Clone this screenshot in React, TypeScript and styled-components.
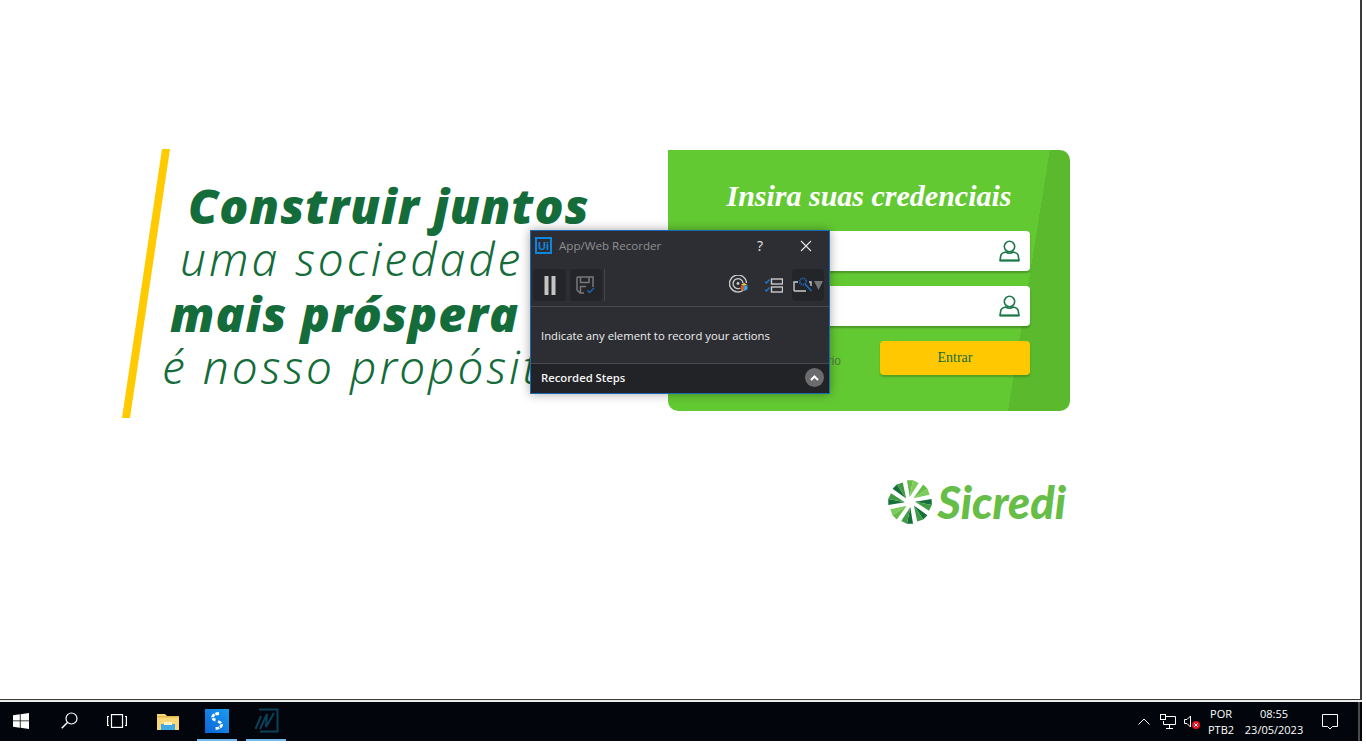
import styled, { createGlobalStyle } from "styled-components";

const Global = createGlobalStyle`
  html, body { margin: 0; padding: 0; background: #ffffff; }
  body { font-family: "Open Sans", sans-serif; overflow: hidden; }
  * { box-sizing: border-box; }
`;

const Screen = styled.div`
  position: relative;
  width: 1362px;
  height: 741px;
  display: flex;
  flex-direction: column;
`;

const Page = styled.main`
  height: 700px;
  display: flex;
  padding: 149px 0 0 122px;
  background: #fff;
  border-right: 2px solid #3a3a3a;
  border-bottom: 1px solid #3a3a3a;
`;

const Slogan = styled.section`
  width: 546px;
  display: flex;
  align-items: flex-start;
`;

const Slash = styled.svg`
  flex: none;
  margin-right: -48px;
`;

const SloganText = styled.div`
  padding-top: 28px;
  white-space: nowrap;
  color: #146c3a;
`;

const Line = styled.div<{ $indent: number; $strong?: boolean }>`
  height: 54px;
  line-height: ${(p) => (p.$strong ? 58 : 54)}px;
  margin-left: ${(p) => p.$indent}px;
  font-family: ${(p) => (p.$strong ? '"Open Sans"' : '"Noto Sans"')}, sans-serif;
  font-style: italic;
  font-weight: ${(p) => (p.$strong ? 800 : 350)};
  font-size: ${(p) => (p.$strong ? 48 : 46)}px;
  letter-spacing: ${(p) => (p.$strong ? 1 : 3)}px;
`;

const RightCol = styled.section`
  width: 402px;
  padding-top: 1px;
`;

const Card = styled.form`
  height: 261px;
  padding: 30px 40px 0;
  border-radius: 0 10px 10px 10px;
  background: linear-gradient(99.1deg, #63c932 377px, #5ab92d 377px);
`;

const CardTitle = styled.h2`
  margin: 0 0 19px;
  text-align: center;
  color: #fff;
  font: italic bold 30px/32px "Liberation Serif", serif;
`;

const Field = styled.div`
  height: 40px;
  margin-bottom: 15px;
  padding-right: 10px;
  display: flex;
  align-items: center;
  justify-content: flex-end;
  background: #fff;
  border-radius: 4px;
  box-shadow: 0 2px 2px rgba(0, 0, 0, 0.25);
`;

const Actions = styled.div`
  display: flex;
  align-items: center;
  justify-content: space-between;
`;

const Forgot = styled.a`
  width: 133px;
  text-align: right;
  white-space: nowrap;
  padding-top: 5px;
  color: #4e7f40;
  font: 12px "Liberation Sans", sans-serif;
`;

const SubmitButton = styled.div`
  width: 150px;
  height: 34px;
  display: flex;
  align-items: center;
  justify-content: center;
  background: #ffc800;
  border-radius: 4px;
  color: #146c3a;
  box-shadow: 0 2px 2px rgba(0, 0, 0, 0.2);
  font: 14px "Liberation Serif", serif;
`;

const Brand = styled.div`
  margin-top: 68px;
  padding-right: 4px;
  display: flex;
  justify-content: flex-end;
  align-items: center;
  gap: 5px;
`;

const BrandName = styled.span`
  color: #66bd47;
  font: italic 900 45px/46px "Lato", sans-serif;
`;

/* floating recorder window */
const Recorder = styled.aside`
  position: absolute;
  left: 530px;
  top: 230px;
  width: 300px;
  height: 164px;
  display: flex;
  flex-direction: column;
  background: #2d2e33;
  border: 1px solid #1d68b4;
  box-shadow: 0 0 10px rgba(0, 0, 0, 0.35);
  font-family: "Open Sans", sans-serif;
`;

const RecHeader = styled.header`
  height: 31px;
  display: flex;
  align-items: center;
  padding: 0 0 2px 4px;
`;

const UiLogo = styled.span`
  width: 17px;
  height: 17px;
  display: flex;
  align-items: center;
  justify-content: center;
  border: 2px solid #0e86e0;
  color: #0e86e0;
  font: bold 11px "Liberation Sans", sans-serif;
`;

const RecTitle = styled.span`
  margin-left: 7px;
  width: 193px;
  color: #8d8e92;
  font-size: 11.6px;
`;

const HeaderGlyph = styled.span<{ $gap?: number }>`
  width: 16px;
  margin-left: ${(p) => p.$gap ?? 0}px;
  display: flex;
  justify-content: center;
  color: #e8e8e8;
  font-size: 14px;
`;

const RecToolbar = styled.div`
  height: 45px;
  padding: 7px 5px 3px 2px;
  display: flex;
  align-items: flex-start;
  border-bottom: 1px solid #4a4b50;
`;

const ToolButton = styled.div<{ $width?: number; $plain?: boolean; $gap?: number }>`
  width: ${(p) => p.$width ?? 33}px;
  height: 32px;
  margin-left: ${(p) => p.$gap ?? 0}px;
  display: flex;
  align-items: center;
  justify-content: center;
  border-radius: 4px;
  background: ${(p) => (p.$plain ? "transparent" : "#242529")};
`;

const ToolSep = styled.div`
  width: 1px;
  height: 32px;
  margin: 0 auto 0 2px;
  background: #46474b;
`;

const RecMessage = styled.div`
  flex: 1;
  padding: 0 10px;
  display: flex;
  align-items: center;
  color: #eeeef0;
  font-size: 11.3px;
`;

const RecFooter = styled.footer`
  height: 30px;
  padding: 0 5px 2px 10px;
  display: flex;
  align-items: center;
  justify-content: space-between;
  background: #222326;
  border-top: 1px solid #4a4b50;
  color: #f4f4f4;
  font-size: 11.3px;
  font-weight: 600;
`;

const RoundButton = styled.div`
  width: 19px;
  height: 19px;
  border-radius: 50%;
  display: flex;
  align-items: center;
  justify-content: center;
  background: #6c6c6e;
`;

/* windows taskbar */
const Taskbar = styled.footer`
  height: 41px;
  display: flex;
  align-items: stretch;
  border-top: 2px solid #ececec;
  background: #02060c;
`;

const TaskSlot = styled.div<{ $width: number; $active?: boolean }>`
  width: ${(p) => p.$width}px;
  display: flex;
  align-items: center;
  justify-content: center;
  border-bottom: 2px solid ${(p) => (p.$active ? "#76b9ed" : "transparent")};
`;

const PinnedApps = styled.div`
  margin-left: 10px;
  display: flex;
  gap: 9px;
`;

const Tray = styled.div`
  margin-left: auto;
  display: flex;
  color: #fff;
  font-size: 11px;
`;

const TrayIcon = styled.div<{ $width: number }>`
  width: ${(p) => p.$width}px;
  display: flex;
  align-items: center;
  justify-content: center;
`;

const TrayText = styled.div<{ $width: number }>`
  width: ${(p) => p.$width}px;
  display: flex;
  flex-direction: column;
  justify-content: center;
  align-items: center;
  line-height: 16px;
  white-space: nowrap;
`;

const EdgeStrip = styled.div`
  width: 10px;
  margin-right: 2px;
  border-right: 2px solid #4b4b4b;
`;

const UserIcon = () => (
  <svg width="21" height="22" viewBox="0 0 21 22" fill="none" stroke="#1d7849" strokeWidth="1.6">
    <circle cx="10.5" cy="6.5" r="5.2" />
    <path d="M1 20.5 L1.8 15.5 Q2.2 13.2 6.5 12 Q10.5 14.6 14.5 12 Q18.8 13.2 19.2 15.5 L20 20.5 Z" />
    <path d="M1 20.5 H20" strokeWidth="2" />
  </svg>
);

// each sail: angle, and which tone takes the bigger share
const sails = [
  { deg: 8, dark: false },
  { deg: 53, dark: false },
  { deg: 98, dark: true },
  { deg: 143, dark: true },
  { deg: 188, dark: true },
  { deg: 233, dark: false },
  { deg: 278, dark: true },
  { deg: 323, dark: true },
];

const Pinwheel = () => (
  <svg width="44" height="46" viewBox="-22 -23 44 46">
    {sails.map((s) => (
      <g key={s.deg} transform={`rotate(${s.deg})`}>
        <polygon points="-1,-5 -6,-21 0,-22" fill={s.dark ? "#146f3a" : "#66bd47"} />
        <polygon points="-1,-5 0,-22 6,-20" fill={s.dark ? "#3f9c43" : "#7ccb5c"} />
      </g>
    ))}
  </svg>
);

export default function App() {
  return (
    <Screen>
      <Global />
      <Page>
        <Slogan>
          <Slash width="48" height="269" viewBox="0 0 48 269">
            <polygon points="40,0 48,0 8,269 0,269" fill="#ffcb00" />
          </Slash>
          <SloganText>
            <Line $indent={66} $strong>Construir juntos</Line>
            <Line $indent={58}>uma sociedade</Line>
            <Line $indent={48} $strong>mais próspera</Line>
            <Line $indent={40}>é nosso propósito</Line>
          </SloganText>
        </Slogan>
        <RightCol>
          <Card>
            <CardTitle>Insira suas credenciais</CardTitle>
            <Field><UserIcon /></Field>
            <Field><UserIcon /></Field>
            <Actions>
              <Forgot>Esqueci meu usuário</Forgot>
              <SubmitButton>Entrar</SubmitButton>
            </Actions>
          </Card>
          <Brand>
            <Pinwheel />
            <BrandName>Sicredi</BrandName>
          </Brand>
        </RightCol>
      </Page>

      <Recorder>
        <RecHeader>
          <UiLogo>Ui</UiLogo>
          <RecTitle>App/Web Recorder</RecTitle>
          <HeaderGlyph>?</HeaderGlyph>
          <HeaderGlyph $gap={30}>
            <svg width="12" height="12" viewBox="0 0 12 12" stroke="#e8e8e8" strokeWidth="1.1">
              <path d="M1 1 L11 11 M11 1 L1 11" />
            </svg>
          </HeaderGlyph>
        </RecHeader>
        <RecToolbar>
          <ToolButton>
            <svg width="12" height="19" viewBox="0 0 12 19">
              <rect x="0.5" y="0" width="4" height="19" fill="#c4c4c4" />
              <rect x="7.5" y="0" width="4" height="19" fill="#c4c4c4" />
            </svg>
          </ToolButton>
          <ToolButton $gap={4} $width={32}>
            <svg width="20" height="19" viewBox="0 0 20 19" fill="none">
              <path d="M1 1 H17 V11 M8 17 H4 L1 14 V1 M4.5 1 V6.5 H13 V1 M4.5 17 V10.5 H10" stroke="#77787b" strokeWidth="1.5" />
              <path d="M11.5 14.5 L13.5 16.5 L18 12" stroke="#1f68b8" strokeWidth="1.3" />
            </svg>
          </ToolButton>
          <ToolSep />
          <ToolButton $plain $width={24}>
            <svg width="20" height="20" viewBox="0 0 20 20" fill="none">
              <path d="M15 14.5 A8.5 8.5 0 1 1 17.5 8" stroke="#c9c9c9" strokeWidth="1.4" />
              <path d="M11.5 13 A5 5 0 1 1 14 8" stroke="#c9c9c9" strokeWidth="1.4" />
              <circle cx="9" cy="8.5" r="1.4" fill="#c9c9c9" />
              <polygon points="15,8 18,9.5 15,11 12,9.5" fill="#f2c24a" />
              <polygon points="12,10 15,11.5 15,16 12,14.5" fill="#e4572e" />
              <polygon points="15,11.5 18.5,10 18.5,14.5 15,16" fill="#35a4e0" />
            </svg>
          </ToolButton>
          <ToolButton $plain $width={34} $gap={5}>
            <svg width="19" height="15" viewBox="0 0 19 15" fill="none">
              <path d="M1 3.5 L2.6 5 L5.5 1.5 M1 11.5 L2.6 13 L5.5 9.5" stroke="#1f74c8" strokeWidth="1.4" />
              <rect x="7.5" y="1" width="11" height="5" stroke="#c9c9c9" strokeWidth="1.4" />
              <rect x="7.5" y="9" width="11" height="5" stroke="#c9c9c9" strokeWidth="1.4" />
            </svg>
          </ToolButton>
          <ToolButton $width={32} $gap={2}>
            <svg width="30" height="16" viewBox="0 0 30 16" fill="none">
              <path d="M1 14 V5 H5 M1 14 H13 M16 5 H18 V9" stroke="#c9c9c9" strokeWidth="1.4" />
              <circle cx="10" cy="4.5" r="3.2" stroke="#1a6cc8" strokeWidth="2" strokeDasharray="1 1" />
              <path d="M12 7 L18.5 14" stroke="#1a6cc8" strokeWidth="1.6" />
              <polygon points="21,4 30,4 25.5,13" fill="#77787b" />
            </svg>
          </ToolButton>
        </RecToolbar>
        <RecMessage>Indicate any element to record your actions</RecMessage>
        <RecFooter>
          Recorded Steps
          <RoundButton>
            <svg width="9" height="6" viewBox="0 0 9 6" fill="none">
              <path d="M1 5 L4.5 1.5 L8 5" stroke="#fff" strokeWidth="2" />
            </svg>
          </RoundButton>
        </RecFooter>
      </Recorder>

      <Taskbar>
        <TaskSlot $width={42}>
          <svg width="16" height="16" viewBox="0 0 16 16" fill="#fff">
            <polygon points="0,2.3 6.8,1.3 6.8,7.5 0,7.5" />
            <polygon points="7.6,1.2 16,0 16,7.5 7.6,7.5" />
            <polygon points="0,8.3 6.8,8.3 6.8,14.7 0,13.7" />
            <polygon points="7.6,8.3 16,8.3 16,16 7.6,14.8" />
          </svg>
        </TaskSlot>
        <TaskSlot $width={54}>
          <svg width="17" height="17" viewBox="0 0 17 17" fill="none" stroke="#fff" strokeWidth="1.2">
            <circle cx="10.5" cy="6.5" r="5.5" />
            <path d="M6.5 10.5 L0.7 16.3" strokeWidth="1.5" />
          </svg>
        </TaskSlot>
        <TaskSlot $width={42}>
          <svg width="20" height="14" viewBox="0 0 20 14" fill="none" stroke="#fff" strokeWidth="1.2">
            <rect x="4.5" y="0.6" width="11" height="12.8" />
            <path d="M2 2.5 H0.6 V11.5 H2 M18 2.5 H19.4 V11.5 H18" />
          </svg>
        </TaskSlot>
        <PinnedApps>
          <TaskSlot $width={40}>
            <svg width="22" height="18" viewBox="0 0 22 18">
              <path d="M0 2 H8 L10 4 H22 V18 H0 Z" fill="#f6d77a" />
              <rect x="0" y="4" width="22" height="1.5" fill="#e4b84a" />
              <rect x="4" y="12" width="14" height="6" fill="#3fa9e6" />
              <rect x="7" y="10" width="8" height="3" fill="#fff3c8" />
            </svg>
          </TaskSlot>
          <TaskSlot $width={40} $active>
            <svg width="24" height="24" viewBox="0 0 24 24" fill="none">
              <defs>
                <linearGradient id="appBlue" x1="0" y1="1" x2="1" y2="0">
                  <stop offset="0" stopColor="#0a64d8" />
                  <stop offset="1" stopColor="#1a9cf0" />
                </linearGradient>
              </defs>
              <rect width="24" height="24" fill="url(#appBlue)" />
              <path d="M14 4.5 Q8 5 7.5 8 Q7.5 10.5 10.5 11 M13 12.5 Q16.5 13.5 16.5 16 Q16 19 10.5 19.5" stroke="#fff" strokeWidth="2.8" strokeDasharray="3.5 1" />
            </svg>
          </TaskSlot>
          <TaskSlot $width={40} $active>
            <svg width="25" height="25" viewBox="0 0 25 25" fill="none" stroke="#0a4058">
              <path d="M5 1.5 H23.5 V23.5 H6" strokeWidth="2" />
              <path d="M1.5 21 L7 8 M6 21 L13 6 L12 19 L20 5" strokeWidth="2" />
            </svg>
          </TaskSlot>
        </PinnedApps>
        <Tray>
          <TrayIcon $width={24}>
            <svg width="12" height="7" viewBox="0 0 12 7" fill="none" stroke="#fff" strokeWidth="1">
              <path d="M0.5 6.5 L6 1 L11.5 6.5" />
            </svg>
          </TrayIcon>
          <TrayIcon $width={24}>
            <svg width="16" height="15" viewBox="0 0 16 15" fill="none" stroke="#fff" strokeWidth="1">
              <path d="M5 2.5 H15.5 V10.5 H3.5 V7" />
              <rect x="0.5" y="0.5" width="5" height="5" />
              <path d="M9.5 10.5 V14 M6 14.5 H13" />
            </svg>
          </TrayIcon>
          <TrayIcon $width={24}>
            <svg width="16" height="14" viewBox="0 0 16 14" fill="none">
              <path d="M0.5 4.5 H3 L6.5 1 V12 L3 8.5 H0.5 Z" stroke="#fff" />
              <circle cx="12" cy="10" r="4" fill="#e81123" />
              <path d="M10.3 8.3 L13.7 11.7 M13.7 8.3 L10.3 11.7" stroke="#fff" />
            </svg>
          </TrayIcon>
          <TrayText $width={34}>
            <span>POR</span>
            <span>PTB2</span>
          </TrayText>
          <TrayText $width={72}>
            <span>08:55</span>
            <span>23/05/2023</span>
          </TrayText>
          <TrayIcon $width={40}>
            <svg width="16" height="16" viewBox="0 0 16 16" fill="none" stroke="#fff" strokeWidth="1">
              <path d="M0.5 0.5 H15.5 V12.5 H10.5 L8 15 L5.5 12.5 H0.5 Z" />
            </svg>
          </TrayIcon>
          <EdgeStrip />
        </Tray>
      </Taskbar>
    </Screen>
  );
}
